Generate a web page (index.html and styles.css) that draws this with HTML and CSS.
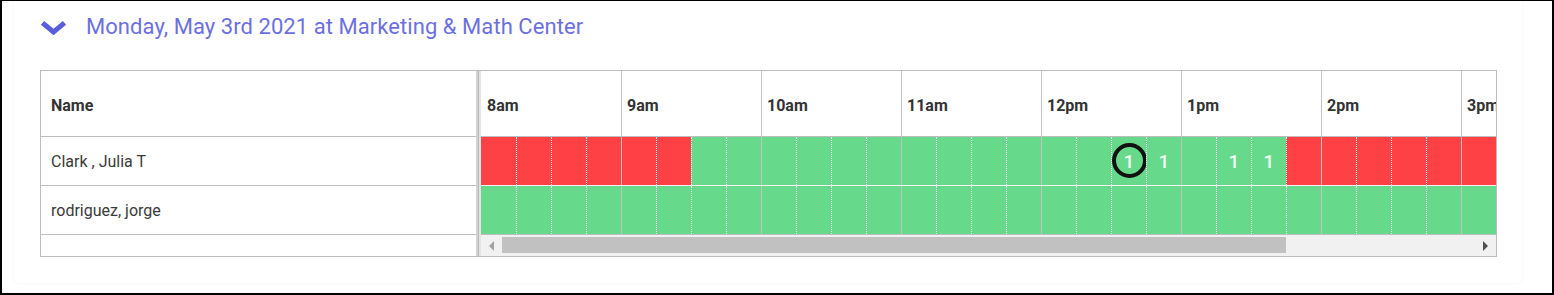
FILE: index.html
```html
<!DOCTYPE html>
<html lang="en">
<head>
<meta charset="utf-8">
<title>Schedule</title>
<link rel="stylesheet" href="styles.css">
</head>
<body>
<div class="frame">
  <div class="card">
    <div class="title-row">
      <svg class="chev" viewBox="0 0 27 15" aria-hidden="true">
        <path d="M2.5 2.8 L13.5 12 L24.5 2.8" fill="none" stroke="#5a5ede" stroke-width="5" stroke-linejoin="miter"/>
      </svg>
      <h2 class="title">Monday, May 3rd 2021 at Marketing &amp; Math Center</h2>
    </div>
    <div class="sched">
      <div class="names">
        <div class="nh">Name</div>
        <div class="nr">Clark , Julia T</div>
        <div class="nr">rodriguez, jorge</div>
        <div class="nf"></div>
      </div>
      <div class="sep"></div>
      <div class="timeline">
        <div class="hours">
          <div class="hc">8am</div>
          <div class="hc">9am</div>
          <div class="hc">10am</div>
          <div class="hc">11am</div>
          <div class="hc">12pm</div>
          <div class="hc">1pm</div>
          <div class="hc">2pm</div>
          <div class="hc">3pm</div>
        </div>
        <div class="srow first">
          <div class="s r"></div><div class="s r"></div><div class="s r"></div><div class="s r"></div>
          <div class="s r hb"></div><div class="s r"></div><div class="s g"></div><div class="s g"></div>
          <div class="s g hb"></div><div class="s g"></div><div class="s g"></div><div class="s g"></div>
          <div class="s g hb"></div><div class="s g"></div><div class="s g"></div><div class="s g"></div>
          <div class="s g hb"></div><div class="s g"></div><div class="s g">1<span class="mark"></span></div><div class="s g">1</div>
          <div class="s g hb"></div><div class="s g">1</div><div class="s g">1</div><div class="s r"></div>
          <div class="s r hb"></div><div class="s r"></div><div class="s r"></div><div class="s r"></div>
          <div class="s r hb"></div><div class="s r"></div><div class="s r"></div><div class="s r"></div>
        </div>
        <div class="srow last">
          <div class="s g"></div><div class="s g"></div><div class="s g"></div><div class="s g"></div>
          <div class="s g hb"></div><div class="s g"></div><div class="s g"></div><div class="s g"></div>
          <div class="s g hb"></div><div class="s g"></div><div class="s g"></div><div class="s g"></div>
          <div class="s g hb"></div><div class="s g"></div><div class="s g"></div><div class="s g"></div>
          <div class="s g hb"></div><div class="s g"></div><div class="s g"></div><div class="s g"></div>
          <div class="s g hb"></div><div class="s g"></div><div class="s g"></div><div class="s g"></div>
          <div class="s g hb"></div><div class="s g"></div><div class="s g"></div><div class="s g"></div>
          <div class="s g hb"></div><div class="s g"></div><div class="s g"></div><div class="s g"></div>
        </div>
        <div class="scrollbar">
          <div class="sb-btn"><span class="arr-left"></span></div>
          <div class="thumb"></div>
          <div class="sb-track"></div>
          <div class="sb-btn"><span class="arr-right"></span></div>
        </div>
      </div>
    </div>
  </div>
</div>
</body>
</html>
```

FILE: styles.css
```css
* { box-sizing: border-box; }
html, body { margin: 0; padding: 0; background: #fff; }
body { font-family: Roboto, "Liberation Sans", sans-serif; color: #333; }

.frame {
  width: 1554px;
  height: 295px;
  border-style: solid;
  border-color: #000;
  border-width: 1px 2px 2px 2px;
  background: #fff;
}

.card {
  margin-left: 12px;
  width: 1508px;
  height: 282px;
  background: #fff;
  border-radius: 0 0 5px 5px;
  box-shadow: 0 0 3px rgba(0, 0, 0, 0.06);
  padding: 11px 0 0 26px;
}

.title-row {
  display: flex;
  align-items: center;
  gap: 19px;
  height: 30px;
}
.chev { width: 27px; height: 15px; display: block; }
.title {
  margin: 0;
  font-size: 22px;
  font-weight: 400;
  line-height: 30px;
  letter-spacing: 0.06px;
  color: #6c6fe2;
}

.sched {
  margin-top: 28px;
  display: flex;
  width: 1457px;
  border: 1px solid #bdbdbd;
}

.names { width: 435px; flex: 0 0 435px; display: flex; flex-direction: column; }
.nh {
  height: 66px;
  border-bottom: 1px solid #bdbdbd;
  display: flex;
  align-items: center;
  padding: 4px 0 0 10px;
  font-weight: 700;
  font-size: 16px;
  color: #333;
}
.nr {
  height: 49px;
  border-bottom: 1px solid #bdbdbd;
  display: flex;
  align-items: center;
  padding-left: 10px;
  font-size: 16px;
  color: #3a3a3a;
}
.nf { height: 21px; }

.sep {
  flex: 0 0 5px;
  background: linear-gradient(to right, #d2d2d2 0 2px, #b8b8b8 2px 3px, #e4e4e4 3px 5px);
}

.timeline {
  flex: 0 0 1015px;
  width: 1015px;
  overflow: hidden;
  display: flex;
  flex-direction: column;
}

.hours {
  display: flex;
  height: 66px;
  border-bottom: 1px solid #bdbdbd;
}
.hc {
  flex: 0 0 140px;
  border-left: 1px solid #c4c4c4;
  padding: 4px 0 0 5px;
  display: flex;
  align-items: center;
  font-weight: 700;
  font-size: 16px;
  color: #333;
  white-space: nowrap;
}
.hc:first-child { border-left: 0; padding-left: 6px; }

.srow { display: flex; height: 49px; }
.srow.first { border-bottom: 1px solid #f4f4f4; }
.srow.last { border-bottom: 1px solid #bdbdbd; }

.s {
  position: relative;
  flex: 0 0 35px;
  border-left: 1px dotted rgba(255, 255, 255, 0.95);
  display: flex;
  align-items: center;
  justify-content: center;
  font-size: 19px;
  font-weight: 500;
  color: #f2fff6;
}
.s:first-child { border-left: 0; }
.s.hb { border-left: 1px solid #c2c2c2; }
.s.r { background: #fe4144; }
.s.g { background: #66d98b; }

.mark {
  position: absolute;
  left: 0;
  top: 6px;
  width: 35px;
  height: 35px;
  border: 4px solid #111;
  border-radius: 50%;
}

.scrollbar {
  display: flex;
  height: 21px;
  background: #f1f1f1;
}
.sb-btn {
  flex: 0 0 21px;
  display: flex;
  align-items: center;
  justify-content: center;
}
.thumb {
  flex: 0 0 784px;
  height: 16px;
  margin-top: 2px;
  background: #c1c1c1;
}
.sb-track { flex: 1; }
.arr-left {
  width: 0; height: 0;
  border-top: 5px solid transparent;
  border-bottom: 5px solid transparent;
  border-right: 5px solid #a3a3a3;
}
.arr-right {
  width: 0; height: 0;
  border-top: 5px solid transparent;
  border-bottom: 5px solid transparent;
  border-left: 5px solid #505050;
}
```
